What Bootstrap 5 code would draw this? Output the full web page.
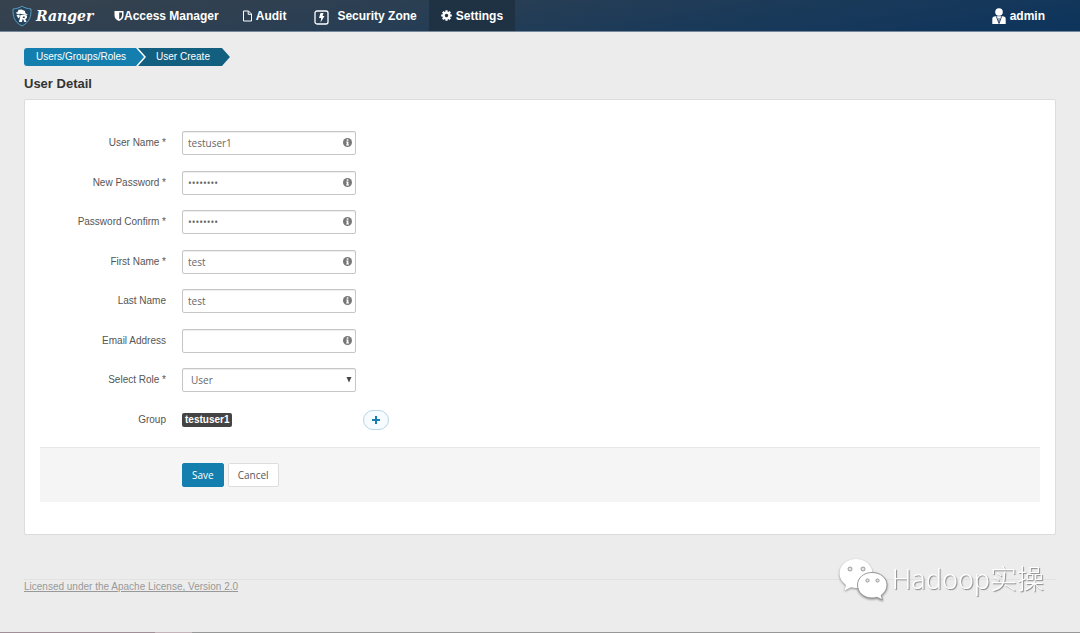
<!DOCTYPE html>
<html lang="en">
<head>
<meta charset="utf-8">
<meta name="viewport" content="width=device-width, initial-scale=1">
<title>Ranger - User Create</title>
<link href="https://cdn.jsdelivr.net/npm/bootstrap@5.3.0/dist/css/bootstrap.min.css" rel="stylesheet">
<style>
  body { background: #ececec; color: #555; font: 10px/16px "Liberation Sans", Arial, sans-serif; }
  a { text-decoration: none; }

  .topbar { background: linear-gradient(170deg, #37424d 0%, #2b3f53 35%, #1b3a59 65%, #0d345c 100%); border-bottom: 1px solid #75889b; padding: 0 24px 0 12px; height: 32px; }
  .topbar a { color: #fff; font-size: 12px; font-weight: bold; line-height: 32px; }
  .topbar .brand-link { width: 82px; height: 31px; }
  .brand-name { font: italic bold 14px/32px "DejaVu Serif", serif; }
  .topbar .nav-link { padding: 0 12px; height: 31px; }
  .topbar .nav-link.active { background: #1f3244; }
  .topbar .user-link { padding: 0 11px; }

  .trail { font-size: 10px; line-height: 18px; }
  .trail li { height: 18px; }
  .trail .step-link { background: #fff; padding-right: 2px; border-radius: 3px 0 0 3px; }
  .trail a, .trail .step-link { clip-path: polygon(0 0, calc(100% - 8px) 0, 100% 50%, calc(100% - 8px) 100%, 0 100%); }
  .trail a { background: #147fae; color: #fff; padding: 0 18px 0 12px; border-radius: 3px 0 0 3px; }
  .trail .step-here { background: #135f80; color: #fff; margin-left: -8px; padding: 0 20px 0 18px; clip-path: polygon(0 0, calc(100% - 8px) 0, 100% 50%, calc(100% - 8px) 100%, 0 100%, 8px 50%); }

  .page { padding: 16px 24px 0; }
  h1 { color: #333; font-size: 13px; line-height: 18px; font-weight: bold; margin: 9px 0 6px; }
  .panel { background: #fff; border: 1px solid #dcdcdc; border-radius: 2px; padding: 31px 15px 32px; }

  .fields { min-height: 301px; }
  .field-row { min-height: 24px; }
  .field-label { width: 126px; text-align: right; line-height: 24px; }
  .field-box { width: 174px; }
  .field-box .form-control, .field-box .form-select { height: 24px; min-height: 24px; padding: 0 24px 0 5px; border: 1px solid #c6c6c6; border-radius: 2px; box-shadow: inset 0 1px 1px #eee; color: #666; background: #fff; font: 10px/20px "Open Sans", sans-serif; }
  .field-box .form-select { padding-left: 8px; }
  .field-icon { position: absolute; right: 4px; top: 7px; pointer-events: none; }
  .group-tag { background: #444; color: #fff; font-size: 10px; font-weight: bold; line-height: 14px; padding: 0 3px; border-radius: 2px; }
  .add-btn { width: 26px; height: 20px; border: 1px solid #bcd6e2; border-radius: 10px; background: #f5fbfe; margin-left: 7px; }

  .actions { background: #f5f5f5; border-top: 1px solid #e8e8e8; margin-top: 15px; padding: 15px 0 15px 142px; }
  .actions .btn { font: 10px/22px "Open Sans", sans-serif; height: 24px; padding: 0 9px; border-radius: 2px; }
  .actions .btn-save { background: #147fae; border-color: #147fae; color: #fff; }
  .actions .btn-cancel { background: #fff; border-color: #ddd; color: #555; }

  footer { border-top: 1px solid #e2e2e2; margin: 44px 24px 0; line-height: 14px; }
  footer a { color: #999; text-decoration: underline; }
  .edge { height: 1px; background: linear-gradient(90deg, #a08f96 0 155px, #c4b4b9 155px 192px, #979797 192px); }

  .watermark { position: fixed; right: 36px; bottom: 32px; pointer-events: none; color: #fff; font: 300 27px/40px "Noto Sans", "Noto Sans CJK SC", sans-serif; text-shadow: 1px 1px 1px #888; }
  .watermark svg { filter: drop-shadow(0 1px 1px #888); }
</style>
</head>
<body>
<div class="d-flex flex-column min-vh-100">
  <header class="topbar d-flex align-items-start">
    <a href="#" class="brand-link d-flex align-items-center">
      <svg width="20" height="22" viewBox="0 0 20 22" class="flex-shrink-0 me-1" aria-hidden="true">
        <path d="M10 1 C8 3 4 3.600 1 4 C0.800 11 2 17 10 21 C18 17 19.200 11 19 4 C16 3.600 12 3 10 1Z" fill="#24435c" stroke="#5f9cbd" stroke-width="1"/>
        <path d="M3.800 7.500 L5.500 7.200 L6.500 4.800 L9.500 4.600 L13 6 L13.200 8 L16 10 L12.500 9.800 L8 8.800 L5 9Z" fill="#fff"/>
        <path d="M4.500 10 L7.500 9.400 L7.800 12 L6.200 13.200Z" fill="#fff"/>
        <path d="M8.500 10 H13 Q15.500 10 15 12.200 Q14.700 13.600 13.300 14 L14.500 17 H12.300 L11.200 14.300 H10.500 L10 17 H7 L8.300 11.200 H8.200Z M11 11.500 L10.700 13 H12 Q12.900 13 13 12.200 Q13 11.500 12.300 11.500Z" fill="#fff" fill-rule="evenodd"/>
      </svg>
      <span class="brand-name">Ranger</span>
    </a>
    <nav class="d-flex flex-grow-1 ms-1" aria-label="Main">
      <a href="#" class="nav-link d-flex align-items-center ms-1">
        <svg width="10" height="12" viewBox="0 0 10 12" aria-hidden="true"><path d="M0.500 1 H9.500 V5.500 Q9.500 9 5 11 Q0.500 9 0.500 5.500Z M5.200 2.400 V9.200 Q8 7.600 8 5.400 V2.400Z" fill="#fff" fill-rule="evenodd"/></svg>
        <span>Access Manager</span>
      </a>
      <a href="#" class="nav-link d-flex align-items-center">
        <svg width="9" height="12" viewBox="0 0 9 12" class="me-1" aria-hidden="true"><path d="M0.500 1 H5.500 L8.500 4 V11 H0.500Z M5.200 1 V4.300 H8.500" fill="none" stroke="#fff"/></svg>
        <span>Audit</span>
      </a>
      <a href="#" class="nav-link d-flex align-items-center ms-1">
        <svg width="15" height="16" viewBox="0 0 15 16" class="mt-1 me-2" aria-hidden="true"><rect x="1" y="1" width="13" height="13" rx="2" fill="none" stroke="#fff" stroke-width="1.300"/><path d="M6.500 3 H9.500 L8.600 6 H10.500 L6.500 12.500 L7.200 8 H5Z" fill="#fff"/></svg>
        <span>Security Zone</span>
      </a>
      <a href="#" class="nav-link active d-flex align-items-center" aria-current="page">
        <svg width="11" height="11" viewBox="-5.500 -5.500 11 11" class="me-1" aria-hidden="true"><circle r="2.900" fill="none" stroke="#fff" stroke-width="2.400"/><path d="M0 -5.300V-3.500M0 5.300V3.500M-5.300 0H-3.500M5.300 0H3.500M-3.700 -3.700L-2.500 -2.500M3.700 3.700L2.500 2.500M-3.700 3.700L-2.500 2.500M3.700 -3.700L2.500 -2.500" stroke="#fff" stroke-width="2.200"/></svg>
        <span>Settings</span>
      </a>
    </nav>
    <a href="#" class="user-link d-flex align-items-center">
      <svg width="14" height="17" viewBox="0 0 14 17" class="me-1" aria-hidden="true"><circle cx="7" cy="4" r="3.800" fill="#fff"/><path d="M0.300 16 V11 Q0.300 8.300 3.300 8.300 H10.700 Q13.700 8.300 13.700 11 V16Z" fill="#fff"/><path d="M4.300 8.300 L7 15.500 L9.700 8.300 M7 10 V13.500" fill="none" stroke="#17375a" stroke-width="0.900"/></svg>
      <span>admin</span>
    </a>
  </header>

  <main class="page">
    <nav aria-label="Breadcrumb">
      <ol class="trail list-unstyled d-flex m-0">
        <li class="step-link"><a href="#" class="d-block">Users/Groups/Roles</a></li>
        <li class="step-here" aria-current="page">User Create</li>
      </ol>
    </nav>
    <h1>User Detail</h1>

    <form class="panel">
      <div class="fields d-flex flex-column justify-content-between">
        <div class="field-row d-flex gap-3">
          <label class="field-label" for="userName">User Name *</label>
          <div class="field-box position-relative"><input class="form-control" id="userName" type="text" value="testuser1"><svg class="field-icon" width="9" height="9" aria-hidden="true"><use href="#info"/></svg></div>
        </div>
        <div class="field-row d-flex gap-3">
          <label class="field-label" for="newPass">New Password *</label>
          <div class="field-box position-relative"><input class="form-control" id="newPass" type="password" value="password"><svg class="field-icon" width="9" height="9" aria-hidden="true"><use href="#info"/></svg></div>
        </div>
        <div class="field-row d-flex gap-3">
          <label class="field-label" for="confirmPass">Password Confirm *</label>
          <div class="field-box position-relative"><input class="form-control" id="confirmPass" type="password" value="password"><svg class="field-icon" width="9" height="9" aria-hidden="true"><use href="#info"/></svg></div>
        </div>
        <div class="field-row d-flex gap-3">
          <label class="field-label" for="firstName">First Name *</label>
          <div class="field-box position-relative"><input class="form-control" id="firstName" type="text" value="test"><svg class="field-icon" width="9" height="9" aria-hidden="true"><use href="#info"/></svg></div>
        </div>
        <div class="field-row d-flex gap-3">
          <label class="field-label" for="lastName">Last Name</label>
          <div class="field-box position-relative"><input class="form-control" id="lastName" type="text" value="test"><svg class="field-icon" width="9" height="9" aria-hidden="true"><use href="#info"/></svg></div>
        </div>
        <div class="field-row d-flex gap-3">
          <label class="field-label" for="email">Email Address</label>
          <div class="field-box position-relative"><input class="form-control" id="email" type="email"><svg class="field-icon" width="9" height="9" aria-hidden="true"><use href="#info"/></svg></div>
        </div>
        <div class="field-row d-flex gap-3">
          <label class="field-label" for="role">Select Role *</label>
          <div class="field-box position-relative"><select class="form-select" id="role"><option>User</option><option>Admin</option><option>Auditor</option></select><svg class="field-icon" width="6" height="9" viewBox="0 0 6 9" aria-hidden="true"><path d="M0.500 2 H5.500 L3 7.500Z" fill="#444"/></svg></div>
        </div>
        <div class="field-row d-flex">
          <span class="field-label me-3">Group</span>
          <div class="field-box d-flex align-items-center"><span class="group-tag">testuser1</span></div>
          <button type="button" class="add-btn d-flex align-items-center justify-content-center align-self-center p-0" aria-label="Add group"><svg width="8" height="8" viewBox="0 0 8 8" aria-hidden="true"><path d="M4 0V8M0 4H8" stroke="#147fae" stroke-width="2"/></svg></button>
        </div>
      </div>
      <div class="actions d-flex">
        <button type="submit" class="btn btn-save me-1">Save</button>
        <button type="button" class="btn btn-cancel">Cancel</button>
      </div>
    </form>
  </main>

  <footer><a href="#">Licensed under the Apache License, Version 2.0</a></footer>
  <div class="edge mt-auto"></div>
</div>

<div class="watermark d-flex align-items-center">
  <svg width="50" height="44" viewBox="0 0 50 44" class="me-1" aria-hidden="true">
    <path fill="#fff" d="M18 2 C8.500 2 1.500 8.500 1.500 16.500 C1.500 21 4 25 8 28 L6.500 33.500 L13 30.200 Q15.500 31 18 31 C27.500 31 34.500 24.500 34.500 16.500 C34.500 8.500 27.500 2 18 2Z"/>
    <path fill="#fff" stroke="#999" d="M34 15.500 C25.500 15.500 19.500 21 19.500 28 C19.500 35.500 26 41 34 41 Q36.500 41 39 40.200 L44.500 43 L43.200 38.200 C46.800 35.800 49 32.300 49 28 C49 21 42.500 15.500 34 15.500Z"/>
    <g fill="#e4e4e4" stroke="#888" stroke-width="0.800"><circle cx="12" cy="12" r="2"/><circle cx="25" cy="12" r="2"/><circle cx="29.500" cy="23.500" r="1.600"/><circle cx="39.500" cy="23.500" r="1.600"/></g>
  </svg>
  <span>Hadoop实操</span>
</div>

<svg class="d-none" aria-hidden="true">
  <symbol id="info" viewBox="0 0 8 8"><circle cx="4" cy="4" r="4" fill="#777"/><path d="M3.300 1.200H4.800V2.400H3.300Z M2.900 3.200H4.800V5.800H5.300V6.700H2.800V5.800H3.300V4.100H2.900Z" fill="#fff"/></symbol>
</svg>
<script src="https://cdn.jsdelivr.net/npm/bootstrap@5.3.0/dist/js/bootstrap.bundle.min.js"></script>
</body>
</html>
